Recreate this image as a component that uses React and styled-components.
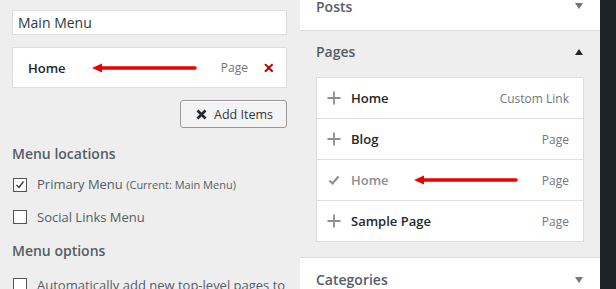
import React from "react";
import styled, { createGlobalStyle } from "styled-components";

const Global = createGlobalStyle`
  html, body { margin: 0; padding: 0; }
  body { font-family: "Open Sans", "Noto Sans", sans-serif; color: #23282d; }
`;

const Page = styled.div`
  display: flex;
  width: 616px;
  height: 289px;
  overflow: hidden;
`;

const LeftPanel = styled.div`
  width: 300px;
  flex: none;
  background: #eeeeee;
  padding: 10px 13px 0 12px;
  box-sizing: border-box;
  display: flex;
  flex-direction: column;
  & > * { flex-shrink: 0; }
`;

const NameInput = styled.div`
  height: 25px;
  box-sizing: border-box;
  border: 1px solid #dddddd;
  background: #fff;
  padding: 0 5px;
  display: flex;
  align-items: center;
  font-size: 14px;
  color: #32373c;
`;

const ItemCard = styled.div`
  margin-top: 12px;
  height: 41px;
  box-sizing: border-box;
  border: 1px solid #dddddd;
  background: #fff;
  display: flex;
  align-items: center;
  padding: 0 11px 0 15px;
`;

const ItemTitle = styled.span`
  font-size: 13px;
  font-weight: 600;
  color: ${(p) => (p.$muted ? "#8c8f94" : "#23282d")};
`;

const TypeLabel = styled.span`
  margin-left: auto;
  font-size: 12px;
  color: #72777c;
`;

const Remove = styled.span`
  margin-left: 15px;
  font-size: 14px;
  font-weight: 700;
  color: #aa0000;
  line-height: 1;
`;

const ButtonRow = styled.div`
  display: flex;
  justify-content: flex-end;
  margin-top: 12px;
`;

const AddButton = styled.button`
  width: 107px;
  height: 28px;
  box-sizing: border-box;
  border: 1px solid #999;
  border-radius: 3px;
  background: #f3f3f3;
  font-family: inherit;
  font-size: 12.5px;
  color: #32373c;
  display: flex;
  align-items: center;
  justify-content: center;
  gap: 7px;
  padding: 0 0 0 2px;
  box-shadow: inset 0 1px 0 #fff;
`;

const Heading = styled.div`
  font-size: 14px;
  font-weight: 600;
  color: #555d66;
  margin-top: ${(p) => p.$mt}px;
  line-height: 20px;
`;

const CheckRow = styled.label`
  display: flex;
  align-items: center;
  gap: 10px;
  margin-top: ${(p) => p.$mt}px;
  font-size: 13px;
  color: #555d66;
  line-height: 20px;
  white-space: nowrap;
`;

const Box = styled.span`
  width: 12px;
  height: 12px;
  flex: none;
  border: 1px solid #555;
  background: #fff;
  margin-left: 1px;
  display: flex;
  align-items: center;
  justify-content: center;
`;

const Small = styled.span`
  font-size: 11px;
`;

const RightPanel = styled.div`
  width: 300px;
  flex: none;
  background: #fff;
  display: flex;
  flex-direction: column;
  & > * { flex-shrink: 0; }
`;

const Section = styled.div`
  background: ${(p) => (p.$open ? "#eeeeee" : "#ffffff")};
  border-bottom: ${(p) => (p.$last ? "none" : "1px solid #dddddd")};
  padding-bottom: ${(p) => (p.$open ? 15 : 0)}px;
`;

const SectionHeader = styled.div`
  height: ${(p) => p.$h}px;
  display: flex;
  align-items: ${(p) => (p.$top ? "flex-start" : "center")};
  justify-content: space-between;
  padding: 0 16px;
  font-size: 14px;
  font-weight: 600;
  color: #555d66;
  line-height: ${(p) => (p.$top ? "13px" : "20px")};
  box-sizing: border-box;
`;

const Triangle = styled.span`
  width: 0;
  height: 0;
  border-left: 4.5px solid transparent;
  border-right: 4.5px solid transparent;
  ${(p) =>
    p.$up
      ? "border-bottom: 6px solid #23282d;"
      : "border-top: 6px solid #72777c;"}
  margin-right: 1px;
  margin-top: ${(p) => (p.$top ? 3 : 0)}px;
`;

const List = styled.div`
  margin: 4px 16px 0 16px;
  border: 1px solid #dddddd;
  background: #fff;
`;

const ListRow = styled.div`
  height: 40px;
  display: flex;
  align-items: center;
  padding: 0 14px 0 10px;
  border-top: ${(p) => (p.$first ? "none" : "1px solid #dddddd")};
`;

const IconSlot = styled.span`
  width: 14px;
  margin-right: 10px;
  display: flex;
  align-items: center;
  justify-content: center;
`;

const DarkStrip = styled.div`
  flex: 1;
  background: #1d2327;
`;

const Arrow = ({ width, ml }) => (
  <svg width={width} height="10" viewBox={`0 0 ${width} 10`} style={{ marginLeft: ml, flex: "none" }}>
    <line x1="8" y1="5" x2={width - 2} y2="5" stroke="#ee0000" strokeWidth="3.5" strokeLinecap="round" />
    <polygon points="0,5 10,0.5 10,9.5" fill="#ee0000" />
  </svg>
);

const Plus = () => (
  <svg width="14" height="14" viewBox="0 0 14 14">
    <path d="M7 0.5v13M0.5 7h13" stroke="#8c8f94" strokeWidth="1.8" />
  </svg>
);

const Check = () => (
  <svg width="12" height="12" viewBox="0 0 12 12">
    <path d="M1.5 6.5l3 3 6-7" fill="none" stroke="#8c8f94" strokeWidth="2.2" />
  </svg>
);

const BoxCheck = () => (
  <svg width="10" height="10" viewBox="0 0 10 10">
    <path d="M1.5 5l2.5 2.5 4.5-6" fill="none" stroke="#333" strokeWidth="1.3" />
  </svg>
);

const rows = [
  { title: "Home", type: "Custom Link" },
  { title: "Blog", type: "Page" },
  { title: "Home", type: "Page", added: true },
  { title: "Sample Page", type: "Page" },
];

export default function App() {
  return (
    <>
      <Global />
      <Page>
        <LeftPanel>
          <NameInput>Main Menu</NameInput>
          <ItemCard>
            <ItemTitle>Home</ItemTitle>
            <Arrow width={105} ml={26} />
            <TypeLabel>Page</TypeLabel>
            <Remove>✕</Remove>
          </ItemCard>
          <ButtonRow>
            <AddButton>
              <svg width="11" height="11" viewBox="0 0 11 11">
                <path d="M1.5 1.5l8 8M9.5 1.5l-8 8" stroke="#23282d" strokeWidth="2.6" />
              </svg>
              Add Items
            </AddButton>
          </ButtonRow>
          <Heading $mt={16}>Menu locations</Heading>
          <CheckRow $mt={10}>
            <Box>
              <BoxCheck />
            </Box>
            <span>
              Primary Menu <Small>(Current: Main Menu)</Small>
            </span>
          </CheckRow>
          <CheckRow $mt={12}>
            <Box />
            <span>Social Links Menu</span>
          </CheckRow>
          <Heading $mt={14}>Menu options</Heading>
          <CheckRow $mt={14}>
            <Box />
            <span>Automatically add new top-level pages to</span>
          </CheckRow>
        </LeftPanel>
        <RightPanel>
          <Section>
            <SectionHeader $h={30} $top>
              <span>Posts</span>
              <Triangle $top />
            </SectionHeader>
          </Section>
          <Section $open>
            <SectionHeader $h={42}>
              <span>Pages</span>
              <Triangle $up />
            </SectionHeader>
            <List>
              {rows.map((r, i) => (
                <ListRow key={i} $first={i === 0}>
                  <IconSlot>{r.added ? <Check /> : <Plus />}</IconSlot>
                  <ItemTitle $muted={r.added}>{r.title}</ItemTitle>
                  {r.added && <Arrow width={104} ml={25} />}
                  <TypeLabel>{r.type}</TypeLabel>
                </ListRow>
              ))}
            </List>
          </Section>
          <Section $last>
            <SectionHeader $h={44}>
              <span>Categories</span>
              <Triangle />
            </SectionHeader>
          </Section>
        </RightPanel>
        <DarkStrip />
      </Page>
    </>
  );
}
